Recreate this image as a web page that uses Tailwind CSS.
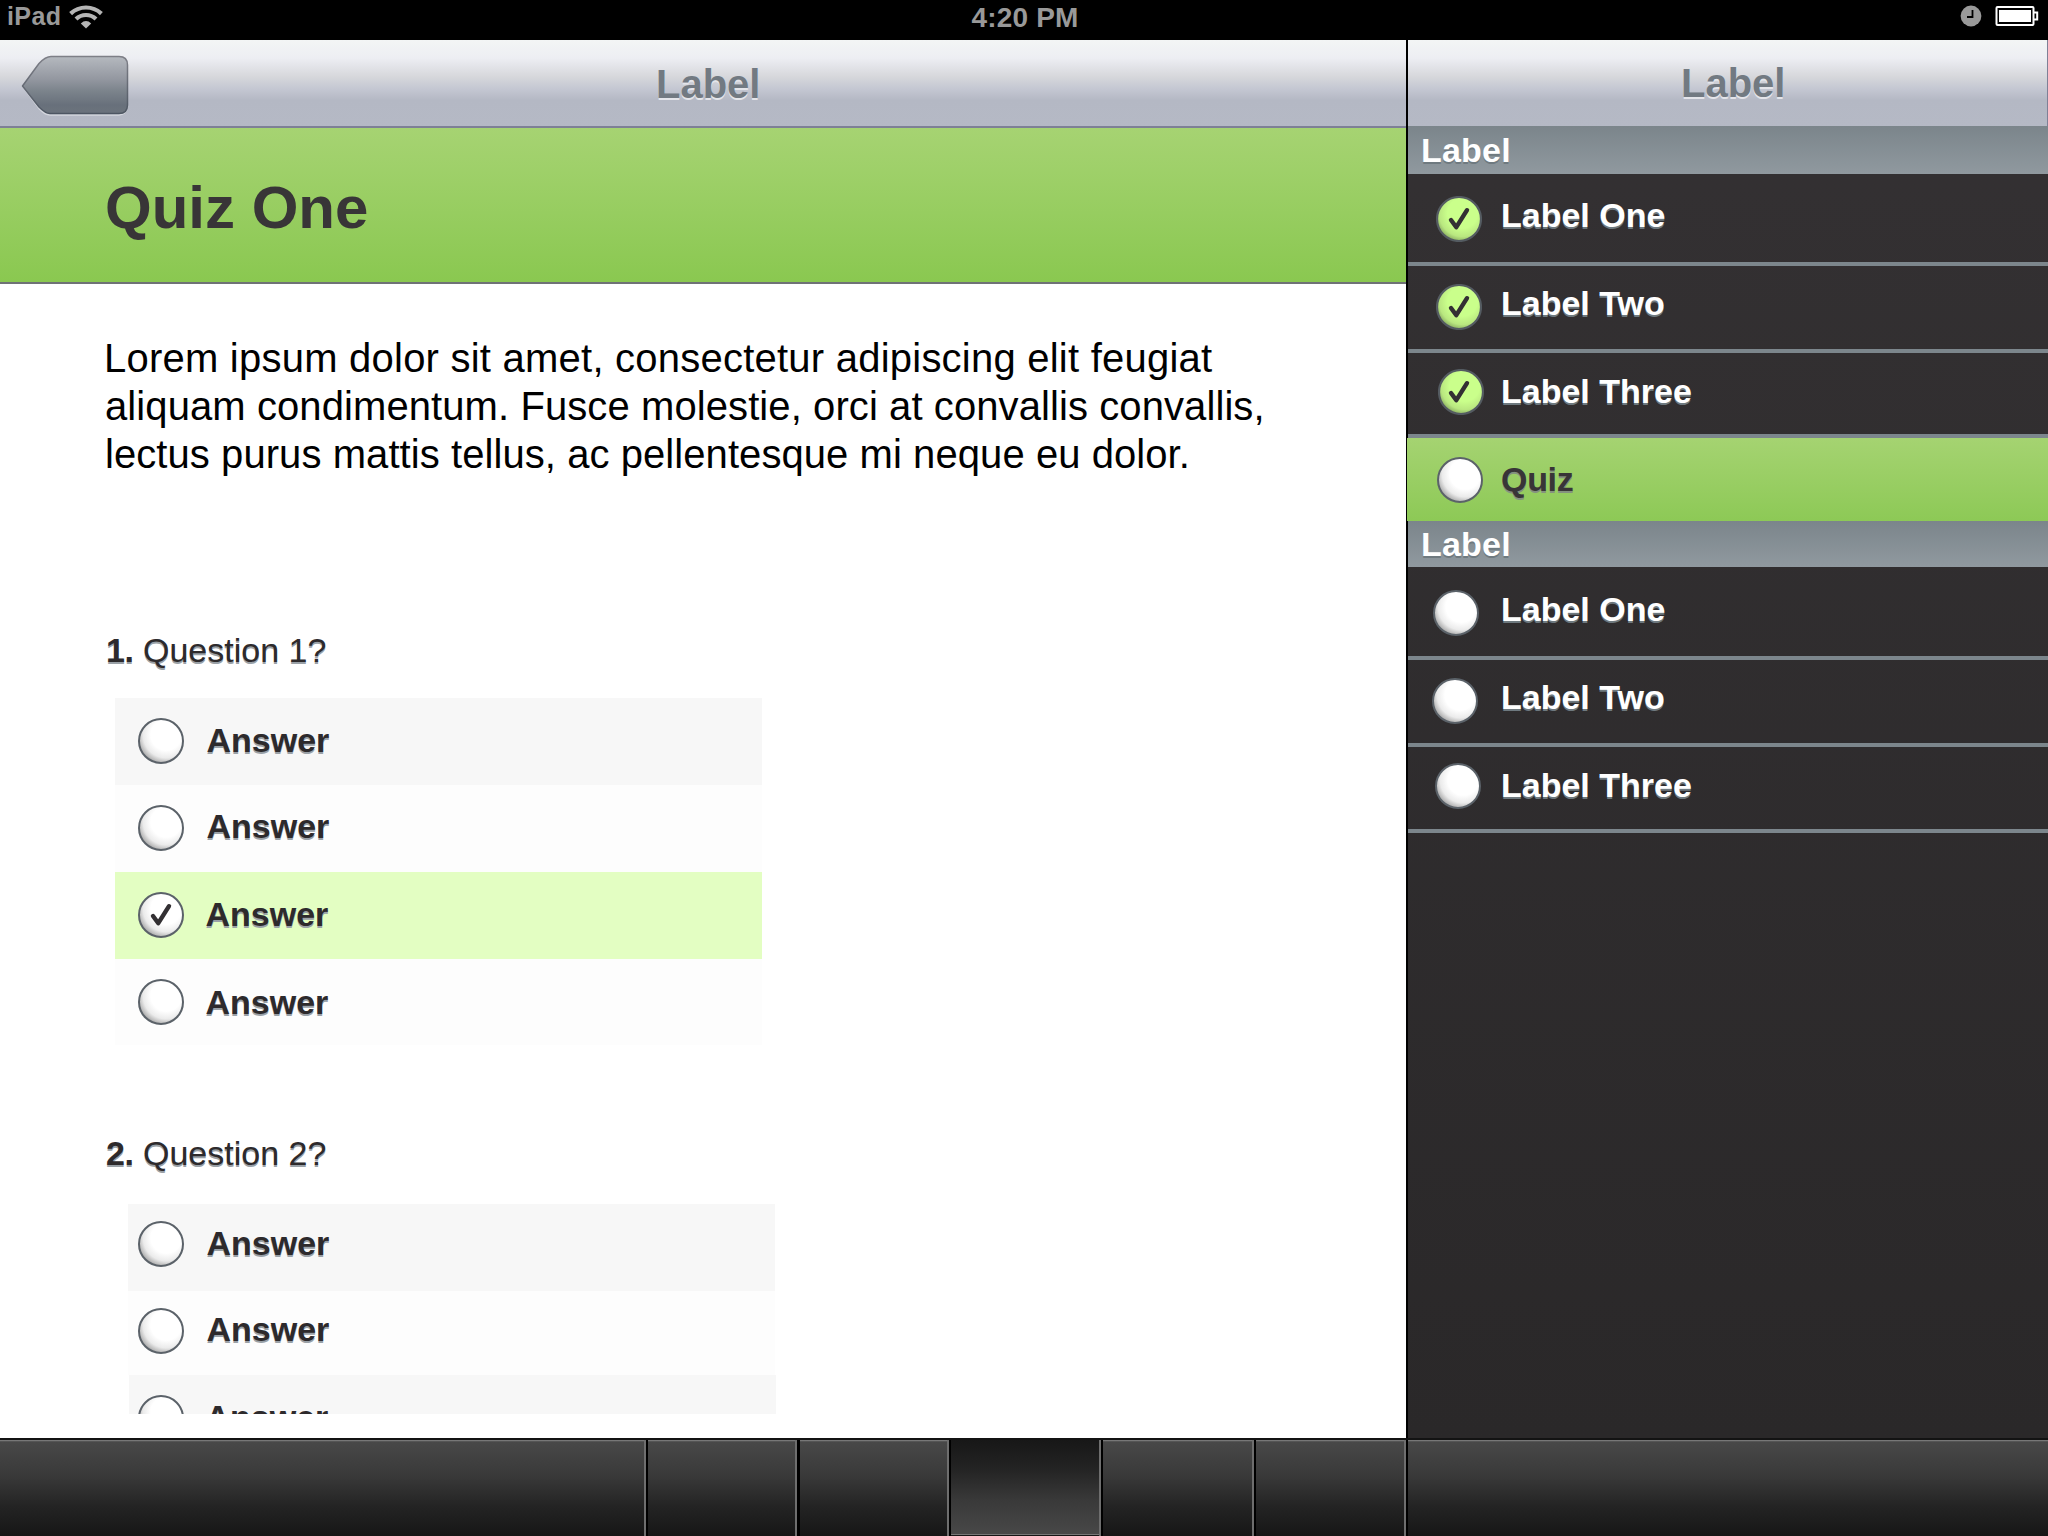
<!DOCTYPE html>
<html lang="en">
<head>
<meta charset="utf-8">
<title>Quiz One</title>
<script src="https://cdn.jsdelivr.net/npm/@tailwindcss/browser@4"></script>
</head>
<body class="w-[2048px] h-[1536px] overflow-hidden bg-white font-['Liberation_Sans',Arial,sans-serif]">
<svg width="0" height="0" class="absolute">
  <defs>
    <radialGradient id="ball" cx="0.62" cy="0.36" r="0.7">
      <stop offset="0.5" stop-color="#fff"/><stop offset="0.75" stop-color="#ebebeb"/><stop offset="1" stop-color="#9c9c9c"/>
    </radialGradient>
    <radialGradient id="ballGreen" cx="0.58" cy="0.37" r="0.68">
      <stop offset="0.5" stop-color="#caff8b"/><stop offset="0.78" stop-color="#b9e780"/><stop offset="1" stop-color="#7d9e58"/>
    </radialGradient>
    <linearGradient id="back" x1="0" y1="0" x2="0" y2="1">
      <stop offset="0" stop-color="#b5b9bf"/><stop offset="0.4" stop-color="#9397a0"/><stop offset="0.6" stop-color="#7c848c"/><stop offset="0.85" stop-color="#68707b"/><stop offset="1" stop-color="#6b737c"/>
    </linearGradient>
    <linearGradient id="backEdge" x1="0" y1="0" x2="0" y2="1">
      <stop offset="0" stop-color="#7e7f87"/><stop offset="1" stop-color="#4d5662"/>
    </linearGradient>
    <symbol id="radio" viewBox="0 0 46 46"><circle cx="23" cy="23" r="22" fill="url(#ball)" stroke="#5b6269" stroke-width="2"/></symbol>
    <symbol id="radioGreen" viewBox="0 0 46 46"><circle cx="23" cy="23" r="22" fill="url(#ballGreen)" stroke="#545b61" stroke-width="2.2"/></symbol>
    <symbol id="tick" viewBox="0 0 46 46"><path d="M15 24 20.300 31.200 31 14.200" fill="none" stroke="#333033" stroke-width="4.400" stroke-linecap="round" stroke-linejoin="round"/></symbol>
  </defs>
</svg>

<!-- Status bar -->
<header class="h-10 bg-black flex items-start justify-between text-[#999] font-bold">
  <div class="flex w-[600px] pl-[7px]">
    <span class="text-[25px] leading-[30px] tracking-[0.4px] mt-[1px]">iPad</span>
    <svg class="ml-[8px] mt-[4px]" width="34" height="26" viewBox="0 0 34 26">
      <g fill="none" stroke="#b5b5b5" stroke-width="4.2">
        <path d="M1.6 9.6A22.5 22.5 0 0 1 32.4 9.6"/><path d="M7 15A14.5 14.5 0 0 1 27 15"/>
      </g>
      <path d="M11.8 19.4Q17 14.8 22.2 19.4L17 24.4Z" fill="#b5b5b5"/>
    </svg>
  </div>
  <span class="text-[28px] leading-[32px] tracking-[0.2px] mt-[2px] ml-[2px]">4:20 PM</span>
  <div class="flex w-[600px] justify-end pr-[9px] pt-[5px]">
    <svg width="22" height="22" viewBox="0 0 22 22"><circle cx="11" cy="11" r="10.400" fill="#999"/><path d="M12.500 5V12H7" fill="none" stroke="#000" stroke-width="1.800"/></svg>
    <svg class="ml-[13px]" width="44" height="22" viewBox="0 0 44 22">
      <rect x="1.500" y="2" width="37" height="18" rx="1" fill="none" stroke="#fff" stroke-width="2"/>
      <rect x="4" y="5" width="32" height="12" fill="#fff"/>
      <path d="M39 7.500H42.200V14.500H39" fill="none" stroke="#fff" stroke-width="2"/>
    </svg>
  </div>
</header>

<div class="flex h-[1398px]">
  <!-- Main pane -->
  <main class="w-[1406px] flex flex-col">
    <div class="h-[88px] shrink-0 flex border-b-2 border-[#7e8096] bg-[linear-gradient(#f3f5f5_0%,#edeef3_21%,#d6d7db_43%,#c4c7d2_57%,#b4b8c4_70%,#b5b9c5_100%)]">
      <svg class="ml-[20px] mt-[14px]" width="112" height="62" viewBox="0 0 112 62">
        <path d="M3 33 19.500 55Q25 61 30 61H99Q107 60 107.500 52" fill="none" stroke="#d3d6dd" stroke-width="1.500"/>
        <path d="M2.500 32 19 9.500Q25.500 2.500 31 2.500H99Q107.500 2.500 107.500 11V51Q107.500 59.500 99 59.500H30Q25.500 59.500 19 53Z" fill="url(#back)" stroke="url(#backEdge)" stroke-width="1.500" stroke-linejoin="round"/>
      </svg>
      <h2 class="ml-[524px] mt-[22px] text-[40px] leading-[44px] font-bold text-[#727a82] [text-shadow:0_2px_0_#e4e5ea]">Label</h2>
    </div>
    <div class="h-[156px] shrink-0 border-b-2 border-[#6f7276] bg-linear-to-b from-[#a6d372] to-[#8ac850] pl-[105px] pt-[47px]">
      <h1 class="text-[60px] leading-[66px] font-bold text-[#383537]">Quiz One</h1>
    </div>
    <div class="h-[1130px] overflow-hidden">
      <p class="ml-[104px] mt-[50px] text-[40px] leading-[48px] text-black whitespace-nowrap">
        <span class="block tracking-[0.23px]">Lorem ipsum dolor sit amet, consectetur adipiscing elit feugiat</span>
        <span class="block ml-[1px] tracking-[0.09px]">aliquam condimentum. Fusce molestie, orci at convallis convallis,</span>
        <span class="block ml-[1px] tracking-[0.07px]">lectus purus mattis tellus, ac pellentesque mi neque eu dolor.</span>
      </p>

      <section class="mt-[152px] text-[34px] leading-[40px] text-[#2d2a2c] [text-shadow:0_2px_0_#9aa1a7]">
        <h3 class="ml-[106px]"><b class="tracking-[-0.4px]">1.</b> Question 1?</h3>
        <ul class="mt-[28px] ml-[115px] w-[647px] font-bold">
          <li class="h-[87px] bg-[#f7f7f7] flex pl-[22.500px]"><svg class="mt-[20px] size-[46px]"><use href="#radio"/></svg><span class="ml-[23px] mt-[22px]">Answer</span></li>
          <li class="h-[87px] bg-[#fdfdfd] flex pl-[22.500px]"><svg class="mt-[20px] size-[46px]"><use href="#radio"/></svg><span class="ml-[23px] mt-[21px]">Answer</span></li>
          <li class="h-[87px] bg-[#e3fec2] flex pl-[22.500px]"><svg class="mt-[20px] size-[46px]"><use href="#radio"/><use href="#tick"/></svg><span class="ml-[22px] mt-[22px]">Answer</span></li>
          <li class="h-[86px] bg-[#fdfdfd] flex pl-[22.500px]"><svg class="mt-[20px] size-[46px]"><use href="#radio"/></svg><span class="ml-[22px] mt-[23px]">Answer</span></li>
        </ul>
      </section>

      <section class="mt-[88px] text-[34px] leading-[40px] text-[#2d2a2c] [text-shadow:0_2px_0_#9aa1a7]">
        <h3 class="ml-[106px]"><b class="tracking-[-0.4px]">2.</b> Question 2?</h3>
        <ul class="mt-[31px] ml-[128px] w-[648px] font-bold">
          <li class="h-[87px] w-[647px] bg-[#f7f7f7] flex pl-[9.500px]"><svg class="mt-[17px] size-[46px]"><use href="#radio"/></svg><span class="ml-[23px] mt-[19px]">Answer</span></li>
          <li class="h-[84px] w-[647px] bg-[#fdfdfd] flex pl-[9.500px]"><svg class="mt-[17px] size-[46px]"><use href="#radio"/></svg><span class="ml-[23px] mt-[18px]">Answer</span></li>
          <li class="h-[39px] ml-[1px] w-[647px] overflow-hidden bg-[#f7f7f7] flex pl-[8.500px]"><svg class="mt-[20px] size-[46px] shrink-0"><use href="#radio"/></svg><span class="ml-[22px] mt-[22px]">Answer</span></li>
        </ul>
      </section>
    </div>
  </main>

  <!-- Sidebar -->
  <aside class="w-[642px] border-l-2 border-black bg-linear-to-b from-[#343133] to-[#2a2829] text-[34px] leading-[40px] font-bold text-white">
    <div class="h-[86px] flex border-r border-[#7e8096] bg-[linear-gradient(#f3f5f5_0%,#edeef3_21%,#d6d7db_43%,#c4c7d2_57%,#b4b8c4_70%,#b5b9c5_100%)]">
      <h2 class="ml-[273px] mt-[21px] text-[40px] leading-[44px] text-[#727a82] [text-shadow:0_2px_0_#e4e5ea]">Label</h2>
    </div>
    <h3 class="h-[48px] bg-linear-to-b from-[#7b858b] to-[#90999f] pl-[13px] pt-[4px] tracking-[0.2px] [text-shadow:0_2px_0_#6f7a80]">Label</h3>
    <ul class="[text-shadow:0_2px_0_#6e797f]">
      <li class="h-[92px] border-b-4 border-[#7c868c] flex"><svg class="ml-[28px] mt-[22px] size-[46px]"><use href="#radioGreen"/><use href="#tick"/></svg><span class="ml-[19px] mt-[21px]">Label One</span></li>
      <li class="h-[87px] border-b-4 border-[#7c868c] flex"><svg class="ml-[28px] mt-[18px] size-[46px]"><use href="#radioGreen"/><use href="#tick"/></svg><span class="ml-[19px] mt-[17px]">Label Two</span></li>
      <li class="h-[85px] border-b-4 border-[#7c868c] flex"><svg class="ml-[29.500px] mt-[16px] size-[46px]"><use href="#radioGreen"/><use href="#tick" x="-2"/></svg><span class="ml-[17.500px] mt-[18px]">Label Three</span></li>
      <li class="h-[83px] ml-[-1px] bg-linear-to-b from-[#a5d371] to-[#8dc956] text-[#383537] [text-shadow:0_2px_0_#84917f] flex"><svg class="ml-[30px] mt-[19px] size-[46px]"><use href="#radio"/></svg><span class="ml-[18px] mt-[21px] tracking-[-0.3px]">Quiz</span></li>
    </ul>
    <h3 class="h-[46px] bg-linear-to-b from-[#7b858b] to-[#90999f] pl-[13px] pt-[3px] tracking-[0.2px] [text-shadow:0_2px_0_#6f7a80]">Label</h3>
    <ul class="[text-shadow:0_2px_0_#6e797f]">
      <li class="h-[93px] border-b-4 border-[#7c868c] flex"><svg class="ml-[25px] mt-[23px] size-[46px]"><use href="#radio"/></svg><span class="ml-[22px] mt-[22px]">Label One</span></li>
      <li class="h-[87px] border-b-4 border-[#7c868c] flex"><svg class="ml-[24px] mt-[18px] size-[46px]"><use href="#radio"/></svg><span class="ml-[23px] mt-[17px]">Label Two</span></li>
      <li class="h-[86px] border-b-4 border-[#7c868c] flex"><svg class="ml-[27px] mt-[16px] size-[46px]"><use href="#radio"/></svg><span class="ml-[20px] mt-[18px]">Label Three</span></li>
    </ul>
  </aside>
</div>

<!-- Bottom tab bar -->
<nav class="h-[98px] flex border-t-2 border-[#131313] bg-[linear-gradient(#777_0,#777_1px,#555_1px,#555_2px,#484848_2px,#393939_36px,#242424_66px,#161616_96px)]">
  <div class="w-[648px] border-r-2 border-black"><div class="h-full border-r-2 border-[#6e6e6e]"></div></div>
  <div class="w-[152px] border-r-3 border-black"><div class="h-full border-r-2 border-[#6e6e6e]"></div></div>
  <div class="w-[151px] border-r-2 border-black"><div class="h-full border-r-2 border-[#6e6e6e]"></div></div>
  <div class="w-[152px] border-r-2 border-black"><div class="h-full border-r-2 border-[#6e6e6e] bg-[linear-gradient(#171717_0,#242424_30px,#393939_60px,#484848_94px,#777_94px,#777_95px,#161616_95px)]"></div></div>
  <div class="w-[153px] border-r-2 border-black"><div class="h-full border-r-2 border-[#6e6e6e]"></div></div>
  <div class="w-[152px] border-r-2 border-black"><div class="h-full border-r-2 border-[#6e6e6e]"></div></div>
  <div class="flex-1"></div>
</nav>
</body>
</html>
